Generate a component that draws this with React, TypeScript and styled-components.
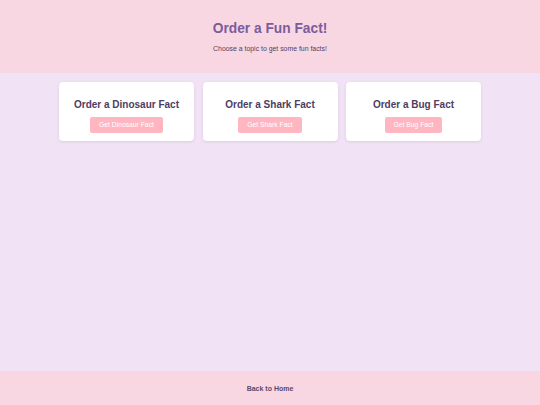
import styled, { createGlobalStyle } from "styled-components";

const GlobalStyle = createGlobalStyle`
  html, body {
    margin: 0;
    padding: 0;
    height: 100%;
  }
  body {
    font-family: "Liberation Sans", Arial, sans-serif;
    background: #f1e3f5;
  }
  #root {
    height: 100%;
  }
`;

const Page = styled.div`
  display: flex;
  flex-direction: column;
  min-height: 100vh;
`;

const Header = styled.header`
  background: #f8d7e3;
  text-align: center;
  padding: 21px 20px 20px;
`;

const Title = styled.h1`
  margin: 0;
  font-size: 13.75px;
  line-height: 16px;
  font-weight: 700;
  color: #7b5c9c;
`;

const Subtitle = styled.p`
  margin: 8px 0 0;
  font-size: 6.9px;
  line-height: 8px;
  color: #4f4060;
`;

const Main = styled.main`
  flex: 1;
  background: #f1e3f5;
  padding-top: 9px;
`;

const CardGrid = styled.div`
  display: grid;
  grid-template-columns: repeat(3, 135px);
  gap: 8.5px;
  justify-content: center;
`;

const Card = styled.div`
  background: #ffffff;
  border-radius: 4px;
  box-shadow: 0 1px 3px rgba(90, 60, 110, 0.14);
  padding: 16.5px 10px 8px;
  display: flex;
  flex-direction: column;
  align-items: center;
`;

const CardTitle = styled.h2`
  margin: 0 0 6.5px;
  font-size: 10px;
  line-height: 11.5px;
  font-weight: 700;
  color: #4e3d62;
`;

const FactButton = styled.button`
  border: none;
  border-radius: 2px;
  background: #ffb6c1;
  color: #ffffff;
  font-family: inherit;
  font-size: 6.75px;
  height: 16px;
  padding: 0 9px;
  cursor: pointer;
`;

const Footer = styled.footer`
  background: #f8d7e3;
  height: 34px;
  display: flex;
  align-items: center;
  justify-content: center;
`;

const FooterLink = styled.a`
  font-size: 7px;
  font-weight: 700;
  color: #5b4a6b;
  text-decoration: none;
`;

const topics = ["Dinosaur", "Shark", "Bug"];

export default function App() {
  return (
    <Page>
      <GlobalStyle />
      <Header>
        <Title>Order a Fun Fact!</Title>
        <Subtitle>Choose a topic to get some fun facts!</Subtitle>
      </Header>
      <Main>
        <CardGrid>
          {topics.map((t) => (
            <Card key={t}>
              <CardTitle>Order a {t} Fact</CardTitle>
              <FactButton>Get {t} Fact</FactButton>
            </Card>
          ))}
        </CardGrid>
      </Main>
      <Footer>
        <FooterLink href="#">Back to Home</FooterLink>
      </Footer>
    </Page>
  );
}
